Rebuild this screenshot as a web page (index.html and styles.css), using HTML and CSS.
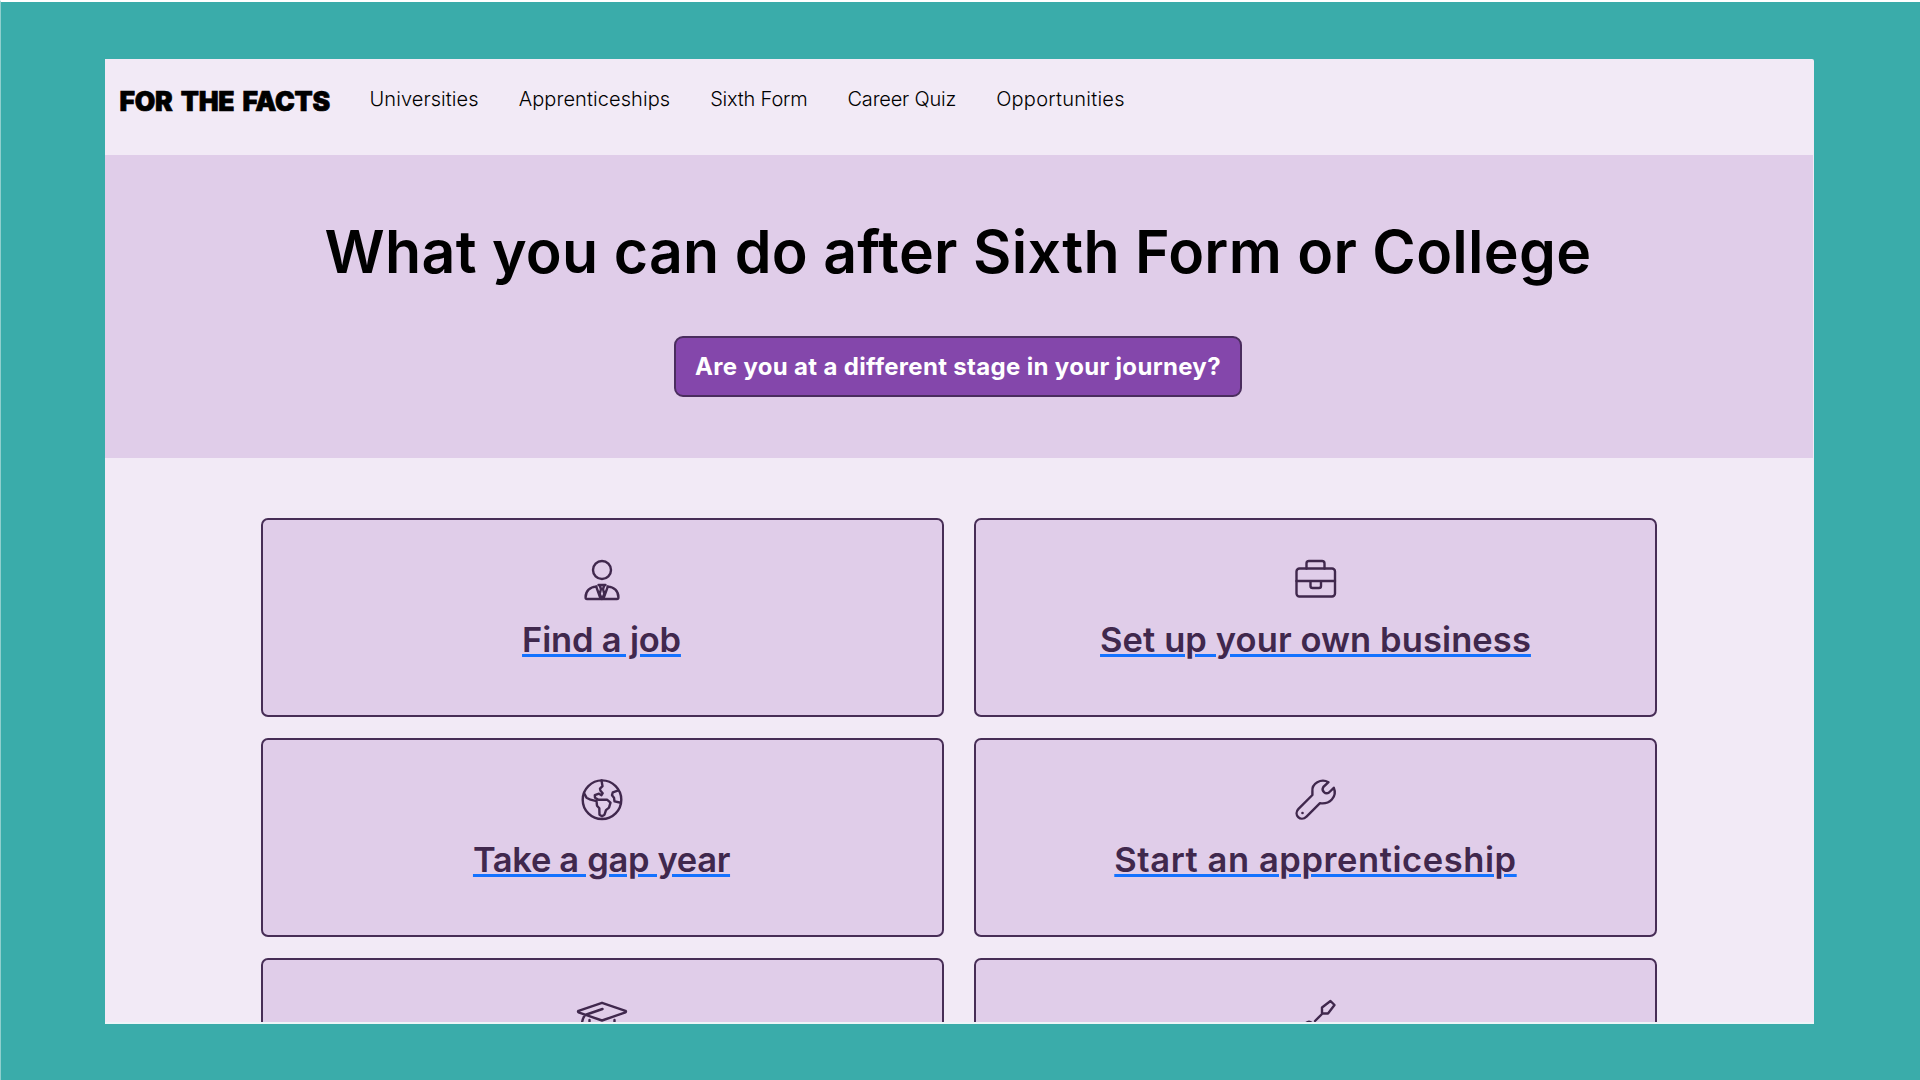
FILE: index.html
```
<!DOCTYPE html>
<html lang="en">
<head>
    <meta charset="UTF-8">
    <meta name="viewport" content="width=device-width, initial-scale=1.0">
    <title>For The Facts - After Sixth Form or College</title>
    <link rel="stylesheet" href="styles.css">
</head>
<body>
    <div class="window">
        <header class="header">
            <a class="logo" href="#">FOR THE FACTS</a>
            <nav class="nav">
                <a class="nav-link universities" href="#">Universities</a>
                <a class="nav-link apprenticeships" href="#">Apprenticeships</a>
                <a class="nav-link sixth-form" href="#">Sixth Form</a>
                <a class="nav-link career-quiz" href="#">Career Quiz</a>
                <a class="nav-link opportunities" href="#">Opportunities</a>
            </nav>
        </header>

        <section class="hero">
            <h1>What you can do after Sixth Form or College</h1>
            <a class="stage-btn" href="#">Are you at a different stage in your journey?</a>
        </section>

        <main class="cards">
            <div class="card">
                <svg class="icon" viewBox="0 0 42 42">
                    <circle cx="21" cy="10" r="9"/>
                    <path d="M15.2 26.6C9 27 4.6 31 4.6 37.2V37.6Q4.6 39 6 39H36Q37.4 39 37.4 37.6V37.2C37.4 31 33 27 26.8 26.6"/>
                    <path d="M15.2 26.6L19.5 38.5M26.8 26.6L22.5 38.5M17.5 25H24.5M18.6 25L20 29L18.7 34L21 39L23.3 34L22 29L23.4 25"/>
                </svg>
                <h2><a class="find-job" href="#">Find a job</a></h2>
            </div>
            <div class="card">
                <svg class="icon" viewBox="0 0 42 42">
                    <rect x="1.5" y="8.5" width="38.5" height="28" rx="3"/>
                    <path d="M11.5 8.5V3.5Q11.5 1 14 1H27Q29.5 1 29.5 3.5V8.5M1.5 21H40M15.5 21V26Q15.5 28 17.5 28H24Q26 28 26 26V21"/>
                </svg>
                <h2><a class="business" href="#">Set up your own business</a></h2>
            </div>
            <div class="card">
                <svg class="icon" viewBox="0 0 42 42">
                    <circle cx="21" cy="19.7" r="19.3"/>
                    <path d="M20.5 .4L21.5 6.200L19 8.700L19.500 10.700L21.700 13.200L20.500 15.200L18 13.700L13.800 15.200L14 17.700L17.500 19.700L26 19.700L29.500 22.700L28 27.700L25 30.200L23.500 34.700L21 36.200L18.500 34.700L18.300 28.200L16 25.700L15.500 21.200L9.500 19.700L5.500 17.700L3 13.200M36.700 10.700L31.800 12.400L31 15.200L33 17.700L33.500 21.400L39.800 22.700"/>
                </svg>
                <h2><a class="gap-year" href="#">Take a gap year</a></h2>
            </div>
            <div class="card">
                <svg class="icon wrench" viewBox="0 1 42 42">
                    <path d="M33.5 3.2C26 -1 16.5 4.5 17.4 12.500V16L3.500 29.900C-2 35.500 5.500 43.500 11.500 37.600L25 24.200C34.500 25.600 42.500 18 38.800 8.800L34 13.500C30.500 16 26 11.800 28.300 8Z"/>
                    <circle class="dot" cx="7.5" cy="34" r="1.3"/>
                </svg>
                <h2><a class="apprenticeship" href="#">Start an apprenticeship</a></h2>
            </div>
            <div class="card">
                <svg class="icon cap" viewBox="0 0 50 42">
                    <path d="M25 2.8L1.5 10.8Q.5 11.5 1.5 12.3L25 20.5L48.5 12.3Q49.5 11.5 48.5 10.8ZM25.5 9L8 15Q5.500 18.500 5 23M12.500 20V33Q25 42 37.500 33V20"/>
                </svg>
            </div>
            <div class="card">
                <svg class="icon" viewBox="0 0 42 42">
                    <path d="M35.5 1L39.5 5L33 13.5H27V7.5ZM27 14L20 21M17.500 23.500Q14 20 10.500 23.500L3 31Q0 36 4 39Q8 42 12 38L19 30.500Q21 27 17.500 23.500Z"/>
                </svg>
            </div>
        </main>
    </div>
</body>
</html>
```

FILE: styles.css
```
* {
    box-sizing: border-box;
}
body {
    font-family: Inter, "Liberation Sans", sans-serif;
    margin: 0;
    height: 1080px;
    padding: 57px 106px 0 104px;
    background-color: #3aacaa;
    border-top: 2px solid #fff;
    border-left: 1px solid #8fcfcd;
    overflow: hidden;
}
a {
    text-decoration: none;
    color: inherit;
}
.window {
    height: 965px;
    overflow: hidden;
    background-color: #f2eaf6;
    border-bottom: 2px solid #edf5f8;
    border-radius: 0 2px 0 0;
}
.header {
    display: flex;
    align-items: flex-start;
    height: 96px;
    padding: 27px 15px 0 14.5px;
}
.logo {
    width: 210px;
    margin-right: 40px;
    padding-top: 1px;
    font-size: 26.5px;
    line-height: 28px;
    font-weight: 900;
    letter-spacing: -0.2px;
    word-spacing: 3px;
    -webkit-text-stroke: 0.7px #000;
    color: #000;
    white-space: nowrap;
}
.nav {
    display: flex;
    gap: 40px;
}
.nav-link {
    font-size: 20px;
    line-height: 26px;
    font-weight: 300;
    color: #000;
    white-space: nowrap;
}
.universities, .apprenticeships {
    letter-spacing: 0.08px;
}
.sixth-form, .career-quiz {
    letter-spacing: -0.2px;
}
.opportunities {
    letter-spacing: 0.25px;
}
.hero {
    display: flex;
    flex-direction: column;
    align-items: center;
    height: 303px;
    padding: 61px 2px 0 0;
    background-color: #e0cde9;
    border-right: 1px solid #f2eaf6;
}
h1 {
    margin: 0;
    font-size: 59px;
    line-height: 72px;
    font-weight: 600;
    letter-spacing: 0.3px;
    color: #000;
    white-space: nowrap;
}
.stage-btn {
    display: flex;
    align-items: center;
    justify-content: center;
    width: 568px;
    height: 61px;
    margin-top: 48px;
    font-size: 24px;
    font-weight: 700;
    letter-spacing: 0.32px;
    color: #fff;
    background-color: #8447ab;
    border: 2px solid #4a2d5e;
    border-radius: 9px;
    white-space: nowrap;
}
.cards {
    display: grid;
    grid-template-columns: 683px 683px;
    grid-auto-rows: 199px;
    gap: 21px 30px;
    padding: 60px 156px 0;
}
.card {
    display: flex;
    flex-direction: column;
    align-items: center;
    padding-top: 40px;
    background-color: #e0cde9;
    border: 2px solid #472d56;
    border-radius: 7px;
}
.card:nth-child(odd) {
    padding-right: 2px;
}
.icon {
    width: 42px;
    height: 42px;
    fill: none;
    stroke: #40284d;
    stroke-width: 2.4;
    stroke-linejoin: round;
    stroke-linecap: round;
    overflow: visible;
}
.icon.cap {
    width: 50px;
}
.dot {
    fill: #40284d;
    stroke: none;
}
h2 {
    margin: 18px 0 0;
    font-size: 34.5px;
    line-height: 40px;
    font-weight: 600;
    color: #40284d;
    white-space: nowrap;
}
h2 a {
    text-decoration: underline 3px #1472ff;
    text-underline-offset: 2px;
}
.find-job {
    letter-spacing: -0.18px;
}
.business {
    letter-spacing: 0.1px;
}
.gap-year {
    letter-spacing: -0.33px;
}
.apprenticeship {
    letter-spacing: 0.58px;
}
```
